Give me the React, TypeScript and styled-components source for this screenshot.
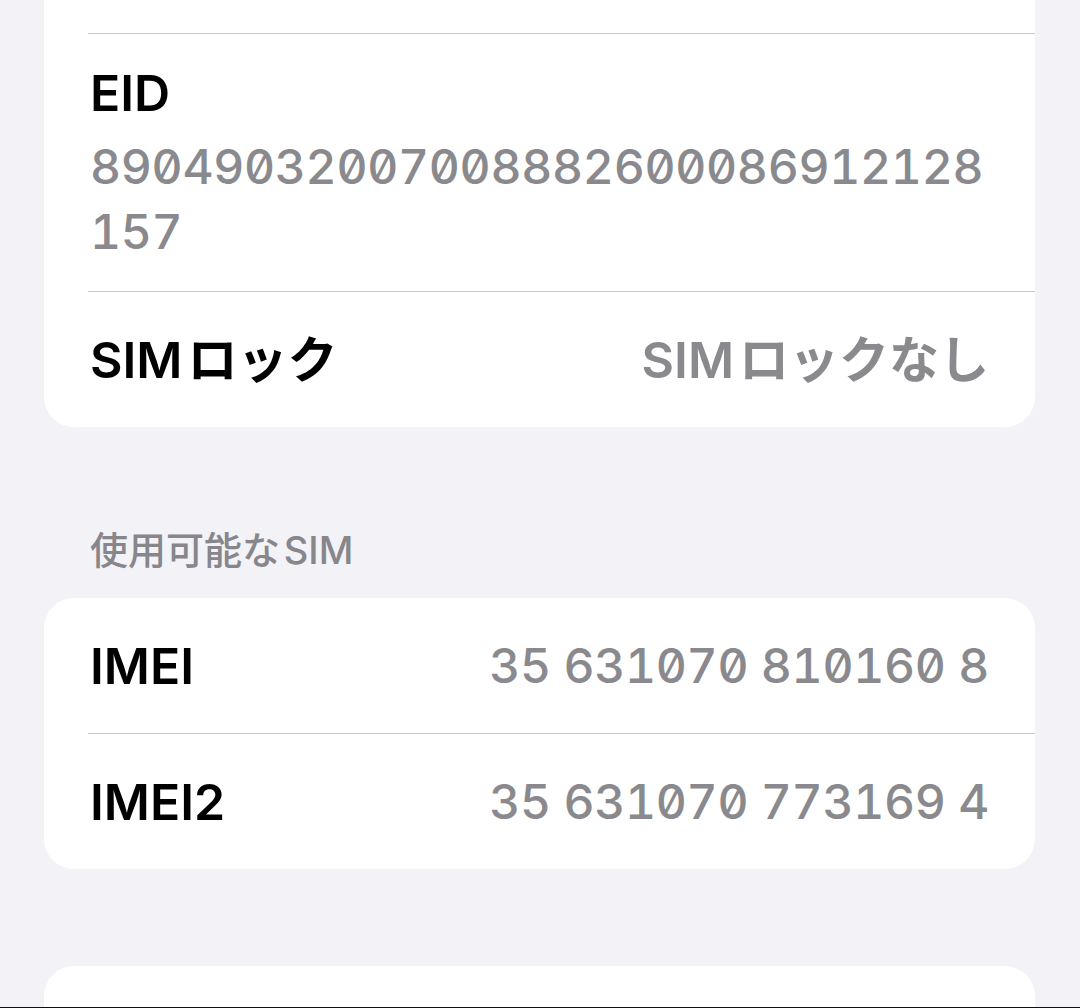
import React from "react";
import styled, { createGlobalStyle } from "styled-components";

const GlobalStyle = createGlobalStyle`
  html, body {
    margin: 0;
    padding: 0;
    background: #f2f2f7;
  }
  body {
    font-family: Inter, "Noto Sans CJK JP", sans-serif;
    -webkit-font-smoothing: antialiased;
  }
`;

type Row = { label: string; value: string; mono?: boolean };

const lockRows: Row[] = [{ label: "SIMロック", value: "SIMロックなし" }];

const simRows: Row[] = [
  { label: "IMEI", value: "35 631070 810160 8", mono: true },
  { label: "IMEI2", value: "35 631070 773169 4", mono: true },
];

// iOS puts a little air between latin and kana runs
const Mixed = ({ text }: { text: string }) => {
  const parts = text.match(/[\x00-\x7f]+|[^\x00-\x7f]+/g) || [];
  return (
    <>
      {parts.map((p, i) =>
        i < parts.length - 1 ? <Run key={i}>{p}</Run> : <React.Fragment key={i}>{p}</React.Fragment>
      )}
    </>
  );
};

const App = () => {
  return (
    <>
      <GlobalStyle />
      <Page>
        <Card>
          <Stub />
          <Separator />
          <StackRow>
            <Label>EID</Label>
            <LongValue>89049032007008882600086912128157</LongValue>
          </StackRow>
          {lockRows.map((r) => (
            <React.Fragment key={r.label}>
              <Separator />
              <InlineRow>
                <Label>
                  <Mixed text={r.label} />
                </Label>
                <Value $mono={r.mono}>
                  <Mixed text={r.value} />
                </Value>
              </InlineRow>
            </React.Fragment>
          ))}
        </Card>

        <SectionHeader>
          <Mixed text="使用可能なSIM" />
        </SectionHeader>
        <Card>
          {simRows.map((r, i) => (
            <React.Fragment key={r.label}>
              {i > 0 && <Separator />}
              <InlineRow>
                <Label>{r.label}</Label>
                <Value $mono={r.mono}>{r.value}</Value>
              </InlineRow>
            </React.Fragment>
          ))}
        </Card>

        <Card $open>
          <Stub />
        </Card>
      </Page>
    </>
  );
};

export default App;

const Page = styled.div`
  height: 1007px;
  overflow: hidden;
  border-bottom: 1px solid #111;
  display: flex;
  flex-direction: column;
  padding: 0 45px 0 44px;
`;

const Card = styled.section<{ $open?: boolean }>`
  background: #ffffff;
  border-radius: 30px;
  flex-shrink: 0;
  &:first-child {
    margin-top: -100px;
  }
  margin-top: ${(p) => (p.$open ? "97px" : "0")};
`;

const Stub = styled.div`
  height: 133px;
`;

const Separator = styled.div`
  height: 1px;
  background: #c8c8cc;
  margin-left: 44px;
`;

const StackRow = styled.div`
  display: flex;
  flex-direction: column;
  padding: 26px 46px 27px 46px;
`;

const InlineRow = styled.div`
  height: 135px;
  display: flex;
  align-items: center;
  justify-content: space-between;
  padding: 0 46px;
`;

const Run = styled.span`
  margin-right: 0.1em;
`;

const Label = styled.span`
  font-family: Inter, "Noto Sans CJK JP", sans-serif;
  font-weight: 600;
  font-size: 50px;
  line-height: 66px;
  color: #000000;
`;

const Value = styled.span<{ $mono?: boolean }>`
  font-family: Inter, "Noto Sans CJK JP", sans-serif;
  font-weight: ${(p) => (p.$mono ? 500 : 600)};
  font-size: ${(p) => (p.$mono ? "48px" : "50px")};
  font-feature-settings: ${(p) => (p.$mono ? '"tnum", "zero"' : "normal")};
  letter-spacing: ${(p) => (p.$mono ? "-0.3px" : "0")};
  line-height: 66px;
  color: #8a8a8e;
`;

const LongValue = styled.div`
  font-family: Inter, sans-serif;
  font-weight: 500;
  font-size: 48px;
  font-feature-settings: "tnum", "zero";
  letter-spacing: -0.3px;
  line-height: 65px;
  color: #8a8a8e;
  word-break: break-all;
  margin-top: 8px;
`;

const SectionHeader = styled.div`
  font-family: Inter, "Noto Sans CJK JP", sans-serif;
  font-weight: 500;
  font-size: 38px;
  line-height: 44px;
  color: #86868b;
  padding: 101px 46px 26px;
`;
